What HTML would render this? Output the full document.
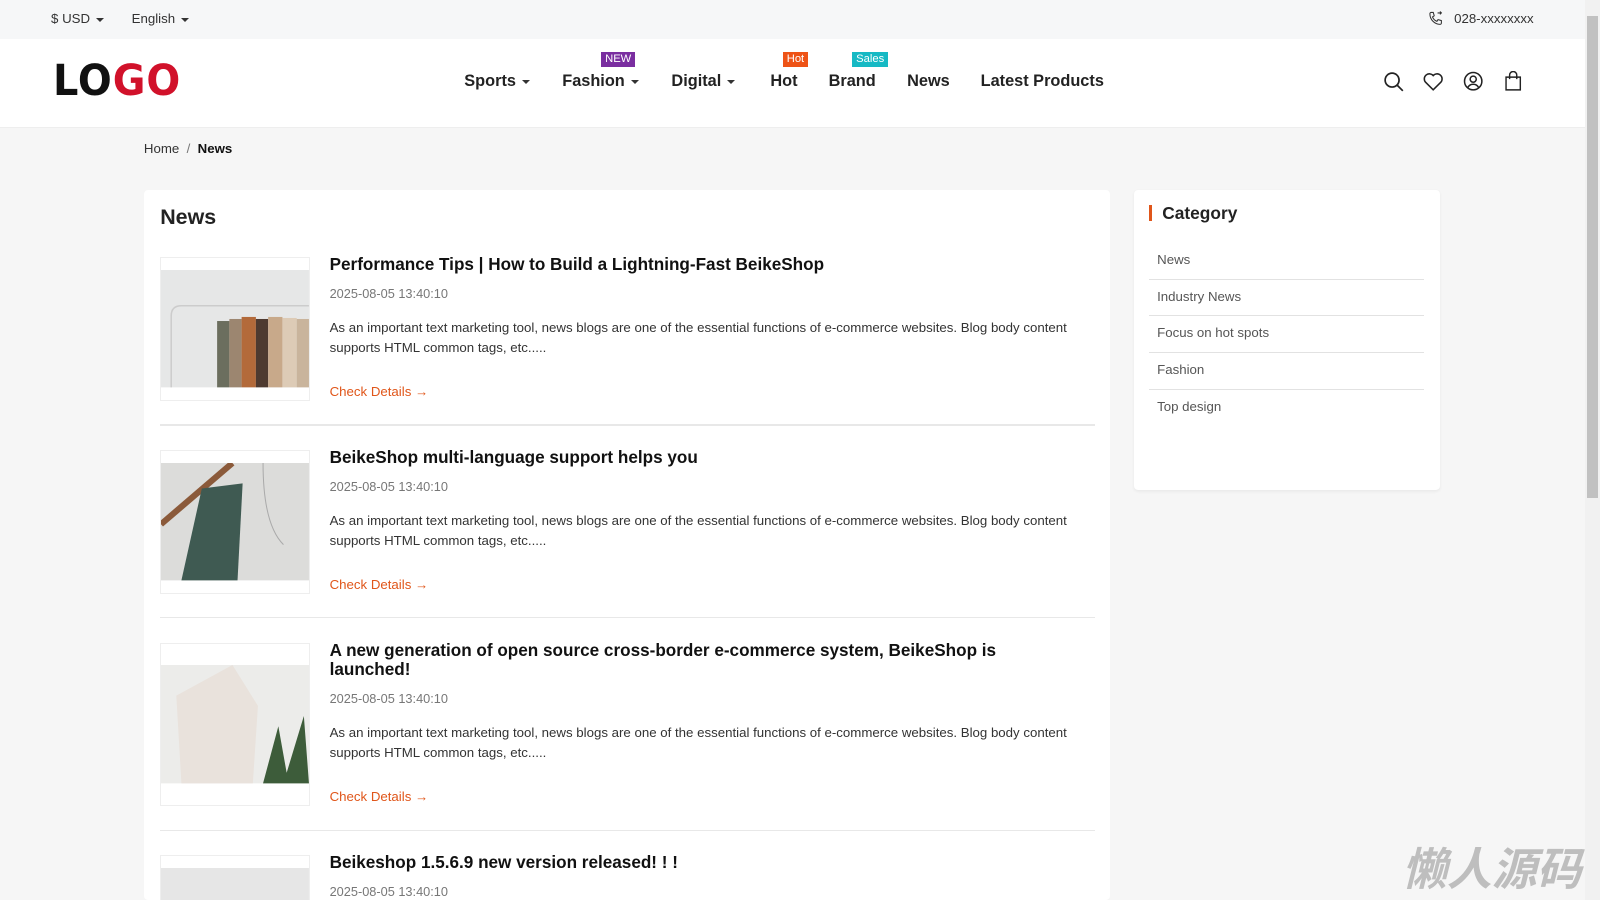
<!DOCTYPE html>
<html><head><meta charset="utf-8"><style>
html,body{margin:0;padding:0;width:1600px;height:900px;overflow:hidden;background:#f6f6f6}
#w{zoom:1.020408;width:1568px;height:882px;position:relative;font-family:"Liberation Sans",sans-serif;color:#222;overflow:hidden}
.abs{position:absolute}
.top{left:0;top:0;width:1553px;height:38px;background:#f6f7f8;font-size:13px;color:#333}
.hdr{left:0;top:38px;width:1553px;height:86px;background:#fff;border-bottom:1px solid #eee}
.nav{top:71px;font-size:16px;font-weight:bold;color:#222;white-space:nowrap}
.car{display:inline-block;border-left:4px solid transparent;border-right:4px solid transparent;border-top:4px solid #333;vertical-align:middle;margin-left:6px}
.badge{font-size:11px;color:#fff;padding:1px 4px;line-height:13px;top:51px}
.card{background:#fff;border-radius:4px}
.item .img{position:absolute;left:157px;width:145px;height:139px;border:1px solid #eee;background:#fff}
.t{font-size:16.8px;font-weight:bold;color:#111;left:323px;width:700px;line-height:19px}
.d{font-size:12.5px;color:#777;left:323px}
.p{font-size:13px;color:#333;left:323px;width:735px;line-height:19.5px}
.c{font-size:13px;color:#e0561a;left:323px}
.hr{left:157px;width:916px;height:1px;background:#e8e8e8}
.cat{left:1126px;width:270px;font-size:13px;color:#555}
.cat div{height:35px;line-height:34px;padding-left:8px;border-bottom:1px solid #e2e2e2}
svg{position:absolute}
</style></head><body><div id="w">
<div class="abs top">
<span class="abs" style="left:50px;top:11px">$ USD<span class="car"></span></span>
<span class="abs" style="left:129px;top:11px">English<span class="car"></span></span>
<svg style="left:1399px;top:11px" width="15" height="15" viewBox="0 0 16 16" fill="none" stroke="#333" stroke-width="1.1"><path d="M3 1.5l2.5 0 1 3.5-1.8 1.2a8 8 0 0 0 4.6 4.6L10.5 9l3.5 1v2.5a1.5 1.5 0 0 1-1.5 1.5A11 11 0 0 1 2 3 1.5 1.5 0 0 1 3 1.5z"/><path d="M10 2h4M12.5 0.5L14 2l-1.5 1.5"/></svg>
<span class="abs" style="left:1425px;top:11px">028-xxxxxxxx</span>
</div>
<div class="abs hdr"></div>
<div class="abs" style="left:52px;top:58px;font-size:42px;font-weight:bold;letter-spacing:1px;line-height:44px;font-family:'DejaVu Sans',sans-serif;transform:scaleX(0.93);transform-origin:left"><span style="color:#111">LO</span><span style="color:#d1112a">GO</span></div>
<div class="abs nav" style="left:455px">Sports<span class="car"></span></div>
<div class="abs nav" style="left:551px">Fashion<span class="car"></span></div>
<div class="abs nav" style="left:658px">Digital<span class="car"></span></div>
<div class="abs nav" style="left:755px">Hot</div>
<div class="abs nav" style="left:812px">Brand</div>
<div class="abs nav" style="left:889px">News</div>
<div class="abs nav" style="left:961px">Latest Products</div>
<div class="abs badge" style="left:589px;background:#7a2ea0">NEW</div>
<div class="abs badge" style="left:767px;background:#ee5316">Hot</div>
<div class="abs badge" style="left:835px;background:#16b9c4">Sales</div>
<svg style="left:1355px;top:70px" width="21" height="21" viewBox="0 0 20 20" fill="none" stroke="#222" stroke-width="1.6"><circle cx="8.5" cy="8.5" r="6.5"/><path d="M13.3 13.3L18.5 18.5"/></svg>
<svg style="left:1395px;top:71px" width="20" height="19" viewBox="0 0 20 19" fill="none" stroke="#222" stroke-width="1.5"><path d="M10 17.5L2.5 10A4.6 4.6 0 0 1 10 3.5 4.6 4.6 0 0 1 17.5 10z"/></svg>
<svg style="left:1434px;top:70px" width="20" height="20" viewBox="0 0 20 20" fill="none" stroke="#222" stroke-width="1.5"><circle cx="10" cy="10" r="8.5"/><circle cx="10" cy="8" r="3"/><path d="M4.7 16.2a6 6 0 0 1 10.6 0"/></svg>
<svg style="left:1474px;top:70px" width="18" height="20" viewBox="0 0 18 20" fill="none" stroke="#222" stroke-width="1.4"><path d="M2 6h14v12.5H2z"/><path d="M5.5 8V4a3.5 3.5 0 0 1 7 0v4"/></svg>
<div class="abs" style="left:141px;top:138px;font-size:13px;color:#333">Home &nbsp;<span style="color:#777">/</span>&nbsp; <b style="color:#111">News</b></div>
<div class="abs card" style="left:141px;top:186px;width:947px;height:696px"></div>
<div class="abs" style="left:157px;top:201px;font-size:21px;font-weight:bold;color:#222">News</div>
<div class="item">
<div class="img" style="top:252px"><svg style="left:0;top:12px" width="145" height="115"><rect width="145" height="115" fill="#e6e7e7"/><path d="M10 115V45q0-10 10-10h125" stroke="#ccc" fill="none" stroke-width="1.5"/><rect x="55" y="50" width="12" height="65" fill="#6b6e5e"/><rect x="67" y="48" width="12" height="67" fill="#9c8670"/><rect x="79" y="46" width="14" height="69" fill="#b36a3a"/><rect x="93" y="48" width="12" height="67" fill="#4e3a30"/><rect x="105" y="46" width="14" height="69" fill="#c8a98a"/><rect x="119" y="47" width="14" height="68" fill="#ddcbb6"/><rect x="133" y="48" width="12" height="67" fill="#c9b49c"/></svg></div>
<div class="abs t" style="top:250px">Performance Tips | How to Build a Lightning-Fast BeikeShop</div>
<div class="abs d" style="top:280px">2025-08-05 13:40:10</div>
<div class="abs p" style="top:312px">As an important text marketing tool, news blogs are one of the essential functions of e-commerce websites. Blog body content supports HTML common tags, etc.....</div>
<div class="abs c" style="top:376px">Check Details →</div>
<div class="abs hr" style="top:416px"></div>
</div>
<div class="item">
<div class="img" style="top:441px"><svg style="left:0;top:12px" width="145" height="115"><rect width="145" height="115" fill="#dcdcda"/><path d="M0 60L70 0" stroke="#8b5a3a" stroke-width="6"/><path d="M40 25L80 20 75 115 20 115z" fill="#3f5a52"/><path d="M100 0q0 60 20 80" stroke="#aaa" fill="none"/></svg></div>
<div class="abs t" style="top:439px">BeikeShop multi-language support helps you</div>
<div class="abs d" style="top:469px">2025-08-05 13:40:10</div>
<div class="abs p" style="top:501px">As an important text marketing tool, news blogs are one of the essential functions of e-commerce websites. Blog body content supports HTML common tags, etc.....</div>
<div class="abs c" style="top:565px">Check Details →</div>
<div class="abs hr" style="top:605px"></div>
</div>
<div class="item">
<div class="img" style="top:630px;height:158px"><svg style="left:0;top:21px" width="145" height="116"><rect width="145" height="116" fill="#ececea"/><path d="M15 30L70 0 95 40 90 116 20 116z" fill="#e9e2dc"/><path d="M100 116L115 60 125 116zM120 116L140 50 145 116z" fill="#3d5c3a"/></svg></div>
<div class="abs t" style="top:628px">A new generation of open source cross-border e-commerce system, BeikeShop is launched!</div>
<div class="abs d" style="top:677px">2025-08-05 13:40:10</div>
<div class="abs p" style="top:709px">As an important text marketing tool, news blogs are one of the essential functions of e-commerce websites. Blog body content supports HTML common tags, etc.....</div>
<div class="abs c" style="top:773px">Check Details →</div>
<div class="abs hr" style="top:813px"></div>
</div>
<div class="item">
<div class="img" style="top:838px;height:44px"><svg style="left:0;top:12px" width="145" height="32"><rect width="145" height="32" fill="#e6e6e6"/></svg></div>
<div class="abs t" style="top:836px">Beikeshop 1.5.6.9 new version released! ! !</div>
<div class="abs d" style="top:866px">2025-08-05 13:40:10</div>
</div>
<div class="abs card" style="left:1111px;top:186px;width:300px;height:294px;box-shadow:0 1px 3px rgba(0,0,0,.06)"></div>
<div class="abs" style="left:1126px;top:201px;width:3px;height:16px;background:#e0561a"></div>
<div class="abs" style="left:1139px;top:199px;font-size:17px;font-weight:bold;color:#222">Category</div>
<div class="abs cat" style="top:238px"><div>News</div><div>Industry News</div><div>Focus on hot spots</div><div>Fashion</div><div style="border:0">Top design</div></div>
<div class="abs" style="left:1374px;top:818px;font-size:44px;font-weight:bold;color:#999;opacity:.6;font-family:'Noto Sans CJK SC',sans-serif;font-style:italic;line-height:60px">懒人源码</div>
<div class="abs" style="left:1553px;top:0;width:15px;height:882px;background:#f1f1f1"></div>
<div class="abs" style="left:1555px;top:16px;width:11px;height:472px;background:#c1c1c1"></div>
</div></body></html>
